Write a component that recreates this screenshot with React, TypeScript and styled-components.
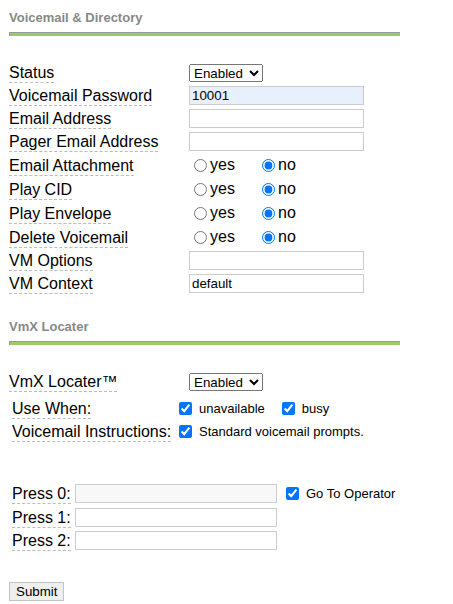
import React from "react";
import styled, { createGlobalStyle } from "styled-components";

const GlobalStyle = createGlobalStyle`
  html, body { margin: 0; padding: 0; background: #fff; }
  body { font-family: "Liberation Sans", Arial, sans-serif; color: #000; }
`;

const Page = styled.div`
  padding: 10px 0 0 9px;
  display: flex;
  flex-direction: column;
  align-items: flex-start;
`;

const SectionTitle = styled.h3<{ $top?: number }>`
  margin: ${(p) => p.$top ?? 0}px 0 0;
  font-size: 13px;
  line-height: 15px;
  font-weight: bold;
  color: #888;
`;

const Rule = styled.div`
  margin-top: 7px;
  width: 390px;
  height: 3px;
  background: #9c6;
  border-top: 1px solid #999;
  border-left: 1px solid #999;
`;

const Form = styled.div<{ $top: number; $indent?: number }>`
  margin-top: ${(p) => p.$top}px;
  padding-left: ${(p) => p.$indent ?? 0}px;
  display: flex;
  flex-direction: column;
`;

const Row = styled.div<{ $h?: number }>`
  display: flex;
  align-items: center;
  height: ${(p) => p.$h ?? 23}px;
`;

const LabelCell = styled.div<{ $w: number }>`
  flex: none;
  width: ${(p) => p.$w}px;
  display: flex;
  align-items: center;
`;

const FieldLabel = styled.span`
  font-size: 16px;
  line-height: normal;
  white-space: nowrap;
  border-bottom: 1px dashed #bbb;
  margin-top: 2px;
`;

const TextInput = styled.input<{ $w?: number; $bg?: string }>`
  box-sizing: border-box;
  width: ${(p) => p.$w ?? 175}px;
  height: 19px;
  margin: 0;
  padding: 0 2px;
  border: 1px solid #ccc;
  border-radius: 0;
  background: ${(p) => p.$bg ?? "#fff"};
  font-family: "Liberation Sans", Arial, sans-serif;
  font-size: 13.33px;
  color: #000;
  outline: none;
`;

const Select = styled.select`
  margin: 0;
  height: 18px;
  font-family: "Liberation Sans", Arial, sans-serif;
  font-size: 13.33px;
  color: #000;
`;

const RadioGroup = styled.div`
  display: grid;
  grid-template-columns: 68px auto;
  align-items: center;
`;

const RadioItem = styled.label`
  display: inline-flex;
  align-items: center;
  font-size: 16px;
  line-height: normal;
`;

const Radio = styled.input`
  width: 13px;
  height: 13px;
  margin: 0 3px 0 5px;
`;

const CheckGroup = styled.div`
  display: flex;
  align-items: center;
  gap: 13px;
`;

const CheckItem = styled.label<{ $lead?: number }>`
  display: inline-flex;
  align-items: center;
  gap: 7px;
  margin-left: ${(p) => p.$lead ?? 0}px;
  font-size: 13px;
  line-height: normal;
  white-space: nowrap;
`;

const Check = styled.input`
  width: 13px;
  height: 13px;
  margin: 0 0 0 4px;
`;

const SubmitButton = styled.button`
  margin-top: 30px;
  height: 19px;
  padding: 0 6px;
  border: 1px solid #c3c3c3;
  border-radius: 0;
  background: #efefef;
  font-family: "Liberation Sans", Arial, sans-serif;
  font-size: 13.33px;
  color: #000;
`;

const YesNo = ({ name }: { name: string }) => (
  <RadioGroup>
    <RadioItem>
      <Radio type="radio" name={name} />
      yes
    </RadioItem>
    <RadioItem>
      <Radio type="radio" name={name} defaultChecked />
      no
    </RadioItem>
  </RadioGroup>
);

const Field = ({ label, h, children }: { label: string; h?: number; children?: React.ReactNode }) => (
  <Row $h={h}>
    <LabelCell $w={180}>
      <FieldLabel>{label}</FieldLabel>
    </LabelCell>
    {children}
  </Row>
);

const EnabledSelect = () => (
  <Select defaultValue="Enabled">
    <option>Enabled</option>
    <option>Disabled</option>
  </Select>
);

export default function App() {
  return (
    <>
      <GlobalStyle />
      <Page>
        <SectionTitle>Voicemail &amp; Directory</SectionTitle>
        <Rule />
        <Form $top={25}>
          <Field label="Status">
            <EnabledSelect />
          </Field>
          <Field label="Voicemail Password">
            <TextInput type="text" defaultValue="10001" $bg="#e8f0fe" />
          </Field>
          <Field label="Email Address">
            <TextInput type="text" />
          </Field>
          <Field label="Pager Email Address">
            <TextInput type="text" />
          </Field>
          <Field label="Email Attachment" h={24}>
            <YesNo name="attach" />
          </Field>
          <Field label="Play CID" h={24}>
            <YesNo name="cid" />
          </Field>
          <Field label="Play Envelope" h={24}>
            <YesNo name="envelope" />
          </Field>
          <Field label="Delete Voicemail" h={24}>
            <YesNo name="delete" />
          </Field>
          <Field label="VM Options">
            <TextInput type="text" />
          </Field>
          <Field label="VM Context">
            <TextInput type="text" defaultValue="default" />
          </Field>
        </Form>

        <SectionTitle $top={24}>VmX Locater</SectionTitle>
        <Rule />
        <Form $top={25}>
          <Field label="VmX Locater™">
            <EnabledSelect />
          </Field>
        </Form>
        <Form $top={4} $indent={3}>
          <Row>
            <LabelCell $w={163}>
              <FieldLabel>Use When:</FieldLabel>
            </LabelCell>
            <CheckGroup>
              <CheckItem>
                <Check type="checkbox" defaultChecked />
                unavailable
              </CheckItem>
              <CheckItem>
                <Check type="checkbox" defaultChecked />
                busy
              </CheckItem>
            </CheckGroup>
          </Row>
          <Row>
            <LabelCell $w={163}>
              <FieldLabel>Voicemail Instructions:</FieldLabel>
            </LabelCell>
            <CheckItem>
              <Check type="checkbox" defaultChecked />
              Standard voicemail prompts.
            </CheckItem>
          </Row>
        </Form>

        <Form $top={39} $indent={3}>
          <Row>
            <LabelCell $w={63}>
              <FieldLabel>Press 0:</FieldLabel>
            </LabelCell>
            <TextInput type="text" $w={202} $bg="#f8f8f8" />
            <CheckItem $lead={5}>
              <Check type="checkbox" defaultChecked />
              Go To Operator
            </CheckItem>
          </Row>
          <Row $h={24}>
            <LabelCell $w={63}>
              <FieldLabel>Press 1:</FieldLabel>
            </LabelCell>
            <TextInput type="text" $w={202} />
          </Row>
          <Row>
            <LabelCell $w={63}>
              <FieldLabel>Press 2:</FieldLabel>
            </LabelCell>
            <TextInput type="text" $w={202} />
          </Row>
        </Form>

        <SubmitButton type="button">Submit</SubmitButton>
      </Page>
    </>
  );
}
